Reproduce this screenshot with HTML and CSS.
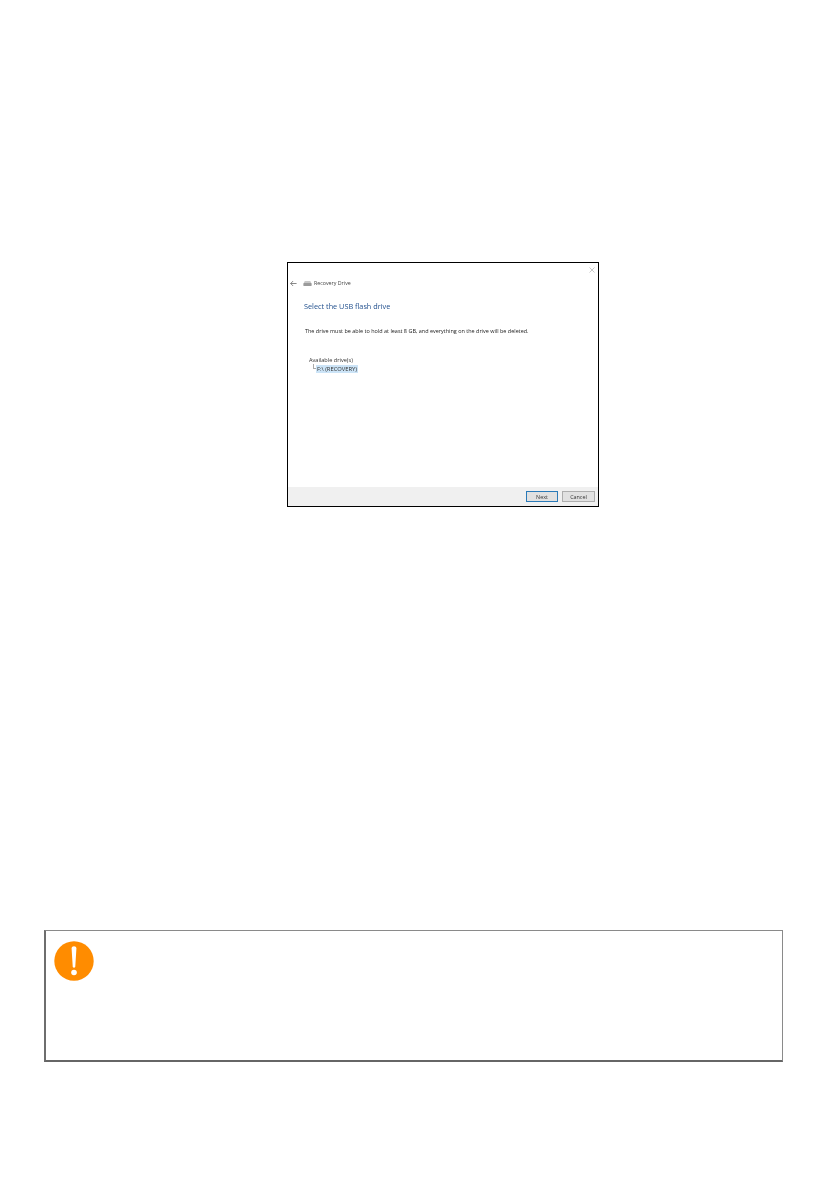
FILE: index.html
```html
<!DOCTYPE html>
<html lang="en">
<head>
<meta charset="utf-8">
<title>Recovery Drive</title>
<link rel="stylesheet" href="styles.css">
</head>
<body>
<main class="page">
  <figure class="shot">
    <div class="dialog">
      <div class="close-row">
        <svg class="close" viewBox="0 0 6 6" aria-hidden="true"><path d="M.5.5l5 5M5.500.5l-5 5"/></svg>
      </div>
      <div class="titlebar">
        <svg class="back" viewBox="0 0 8 8" aria-hidden="true"><path d="M7.500 4H.8M3.500 1.200L.8 4l2.700 2.800"/></svg>
        <svg class="drive" viewBox="0 0 10 7" aria-hidden="true"><path class="drive-top" d="M2 .8h6l1.600 3H.4z"/><rect class="drive-body" x=".4" y="3" width="9.200" height="3.400" rx="1"/></svg>
        <span class="title">Recovery Drive</span>
      </div>
      <div class="content">
        <h1 class="heading">Select the USB flash drive</h1>
        <p class="desc">The drive must be able to hold at least 8 GB, and everything on the drive will be deleted.</p>
        <div class="drives">
          <div class="drives-label">Available drive(s)</div>
          <div class="drive-item"><span class="tree-line"></span><span class="selected">F:\ (RECOVERY)</span></div>
        </div>
      </div>
      <div class="footer">
        <span class="btn btn-primary">Next</span>
        <span class="btn">Cancel</span>
      </div>
    </div>
  </figure>
  <aside class="notice">
    <svg class="notice-icon" viewBox="0 0 40 40" aria-hidden="true">
      <circle class="notice-disc" cx="20" cy="20" r="19.700"/>
      <path class="notice-mark" d="M17.600 7.500c0-1.400 1.100-2.300 2.400-2.300s2.400.9 2.400 2.300L21.300 25.500c-.1.800-.6 1.200-1.300 1.200s-1.200-.4-1.300-1.200z"/>
      <circle class="notice-mark" cx="20" cy="31.500" r="2.800"/>
    </svg>
  </aside>
</main>
</body>
</html>
```
FILE: styles.css
```css
* { box-sizing: border-box; }
html, body { margin: 0; background: #fff; }
.page {
  width: 840px;
  height: 1190px;
  padding-top: 262px;
  font-family: "Open Sans", "Liberation Sans", sans-serif;
  overflow: hidden;
}
.shot { margin: 0 0 0 287px; width: 312px; height: 245px; }
.dialog {
  display: flex;
  flex-direction: column;
  width: 312px;
  height: 245px;
  border: 1px solid #000;
  background: #fff;
  color: #333;
}
.close-row { display: flex; justify-content: flex-end; height: 12px; padding: 4px 3px 0 0; }
.close { width: 6px; height: 6px; }
.close path { fill: none; stroke: #bbb; stroke-width: .8; }
.titlebar { display: flex; align-items: center; height: 16px; padding-left: 2px; filter: blur(.3px); }
.back { width: 7px; height: 7px; margin-right: 6px; }
.back path { fill: none; stroke: #555; stroke-width: .8; }
.drive { width: 9px; height: 7px; margin: 1px 2px 0 0; }
.drive-top { fill: #c8c8c8; }
.drive-body { fill: #9b9b9b; }
.title { font-size: 5.300px; color: #444; line-height: 8px; }
.content { flex: 1; padding: 9px 0 0 16px; filter: blur(.3px); }
.heading {
  margin: 0;
  font-size: 7.300px;
  line-height: 12px;
  font-weight: 400;
  color: #1f4e8c;
}
.desc { margin: 15px 0 0 1px; font-size: 5.470px; line-height: 8px; color: #222; white-space: nowrap; }
.drives { margin: 21px 0 0 5px; font-size: 5.600px; line-height: 8px; color: #333; }
.drive-item { display: flex; align-items: center; height: 8px; margin: 1px 0 0 4px; }
.tree-line { width: 3px; height: 5px; margin-top: -5px; border-left: 1px solid #aaa; border-bottom: 1px solid #aaa; }
.selected { background: #cce4f7; padding: 0 1px; font-size: 5.800px; }
.footer {
  display: flex;
  justify-content: flex-end;
  align-items: center;
  gap: 4px;
  height: 19px;
  padding: 0 3px 0 0;
  background: #f0f0f0;
}
.btn {
  display: flex;
  align-items: center;
  justify-content: center;
  width: 33px;
  height: 11px;
  border: 1px solid #adadad;
  background: #e1e1e1;
  font-size: 5.400px;
  color: #333;
  filter: blur(.2px);
}
.btn-primary { width: 32px; border-color: #2a7ab8; }
.notice {
  width: 739px;
  height: 132px;
  margin: 423px 0 0 44px;
  padding: 10px 0 0 8px;
  border-style: solid;
  border-color: #8a8a8a;
  border-width: 1px 1px 2px 2px;
  border-bottom-color: #666;
  border-left-color: #6e6e6e;
}
.notice-icon { display: block; width: 40px; height: 40px; }
.notice-disc { fill: #ff8c00; }
.notice-mark { fill: #fff; }
```
